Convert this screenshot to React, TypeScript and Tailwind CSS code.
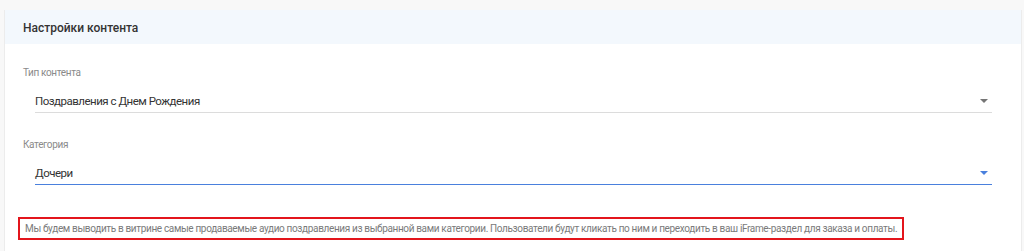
import React from "react";

function Caret({ color }: { color: string }) {
  return (
    <svg width="8" height="4" viewBox="0 0 8 4" className="shrink-0">
      <path d="M0 0 L8 0 L4 4 Z" fill={color} />
    </svg>
  );
}

interface SelectFieldProps {
  label: string;
  value: string;
  active?: boolean;
}

function SelectField({ label, value, active }: SelectFieldProps) {
  return (
    <div>
      <div className="h-[14px] text-[10px] leading-[14px] tracking-[-0.35px] text-[#8a8a8a]">{label}</div>
      <div
        className={
          active
            ? "ml-[12px] mr-[11px] flex h-[33px] items-end justify-between border-b border-[#4a80dd] pb-[3px]"
            : "ml-[12px] mr-[11px] flex h-[33px] items-end justify-between border-b border-[#dcdcdc] pb-[3px]"
        }
      >
        <span className="text-[11.5px] leading-[16px] tracking-[-0.5px] text-[#333]">{value}</span>
        <span className="mb-[6px] mr-[4px]">
          <Caret color={active ? "#4a80dd" : "#757575"} />
        </span>
      </div>
    </div>
  );
}

export default function App() {
  return (
    <div
      className="h-[251px] w-[1024px] overflow-hidden bg-[#f8f8f8] pl-[4px] pr-[2px] pt-[10px]"
      style={{ fontFamily: "Roboto, 'Liberation Sans', sans-serif" }}
    >
      <div className="h-full border-x border-[#ececec] bg-white">
        <div className="flex h-[34px] items-center bg-[#f3f8fd] px-[18px] pt-[1px] text-[12px] font-medium text-[#333]">
          Настройки контента
        </div>
        <div className="px-[18px] pt-[22px]">
          <SelectField label="Тип контента" value="Поздравления с Днем Рождения" />
          <div className="h-[25px]" />
          <SelectField label="Категория" value="Дочери" active />
          <div className="-ml-[5px] mt-[32px] w-[886px] whitespace-nowrap border-2 border-[#e3151c] px-[5px] py-[2px] text-[10px] leading-[15px] tracking-[-0.35px] text-[#7a7a7a]">
            Мы будем выводить в витрине самые продаваемые аудио поздравления из выбранной вами категории. Пользователи будут кликать по ним и переходить в ваш iFrame-раздел для заказа и оплаты.
          </div>
        </div>
      </div>
    </div>
  );
}
